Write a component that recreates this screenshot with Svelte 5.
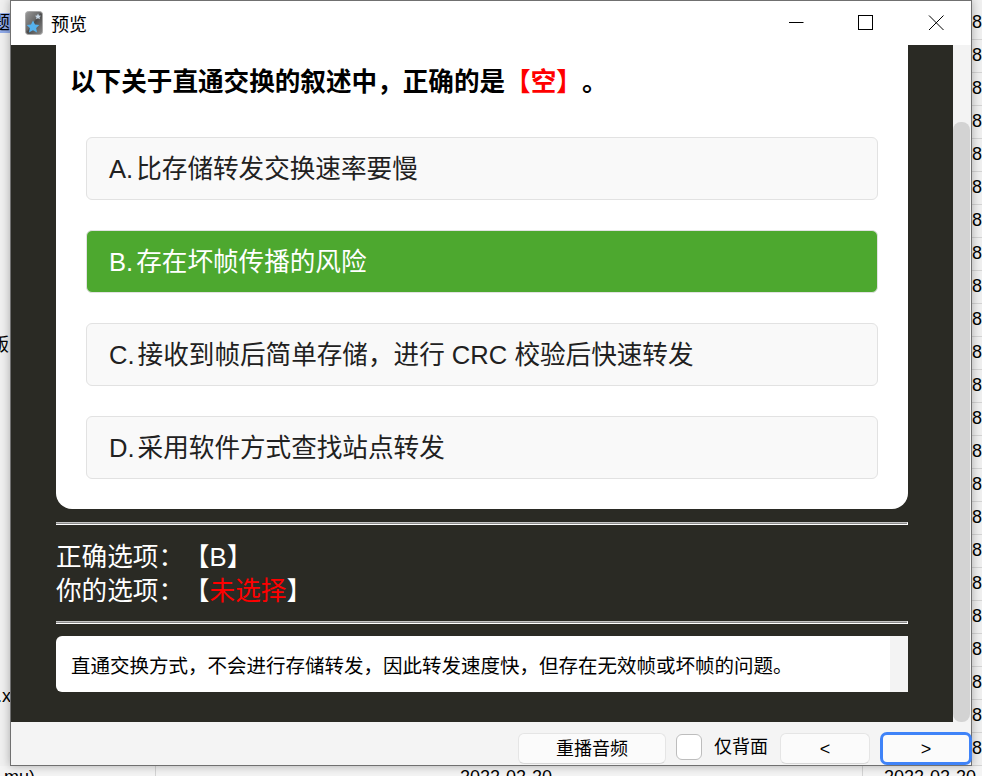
<script>
  const options = [
    { label: "A.", text: "比存储转发交换速率要慢", correct: false },
    { label: "B.", text: "存在坏帧传播的风险", correct: true },
    { label: "C.", text: "接收到帧后简单存储，进行 CRC 校验后快速转发", correct: false },
    { label: "D.", text: "采用软件方式查找站点转发", correct: false },
  ];
  const rightCells = Array(23).fill("8");
</script>

<div class="desktop">
  <div class="table-left">
    <span class="frag selected">题</span>
    <span class="frag ban">版</span>
    <span class="frag ext">.x</span>
  </div>
  <div class="table-right">
    {#each rightCells as c}
      <div class="cell">{c}</div>
    {/each}
  </div>
  <div class="table-bottom">
    <span class="c1">mu)</span>
    <span class="c2">2022-02-20</span>
    <span class="c3">2022-02-20</span>
    <i class="col d1"></i>
    <i class="col d2"></i>
  </div>

  <div class="window">
    <header class="titlebar">
      <svg class="app-icon" width="18" height="24" viewBox="0 0 18 24">
        <defs>
          <linearGradient id="g" x1="0" y1="0" x2="1" y2="1">
            <stop offset="0" stop-color="#9a9a9a" />
            <stop offset="0.45" stop-color="#6a6a6a" />
            <stop offset="0.5" stop-color="#4a4a4a" />
            <stop offset="1" stop-color="#8c8c8c" />
          </linearGradient>
        </defs>
        <rect x="0.5" y="0.5" width="17" height="23" rx="3" fill="url(#g)" stroke="#a8a8a8" />
        <path d="M8 9.500l2 4 4.300.6-3.100 3 .8 4.300L8 19.300l-4 2.100.8-4.300-3.100-3 4.300-.6z" fill="#55b2ee" />
        <path d="M13 2.500l.9 1.900 2.100.3-1.500 1.500.4 2.100-1.900-1-1.900 1 .4-2.100-1.500-1.500 2.100-.3z" fill="#c6d6e4" />
      </svg>
      <span class="title">预览</span>
      <div class="win-controls">
        <svg width="16" height="16" viewBox="0 0 16 16"><path d="M1 7.500H15.500" stroke="#000" fill="none" /></svg>
        <svg width="16" height="16" viewBox="0 0 16 16"><rect x="0.5" y="0.5" width="14" height="14" stroke="#000" fill="none" /></svg>
        <svg width="16" height="16" viewBox="0 0 16 16"><path d="M1 0.500L15.500 15M15.500 0.500L1 15" stroke="#000" fill="none" /></svg>
      </div>
    </header>

    <div class="body">
      <main class="panel">
        <section class="card">
          <h1 class="question">以下关于直通交换的叙述中，正确的是<span class="red">【空】</span>。</h1>
          <div class="options">
            {#each options as o}
              <div class="option" class:correct={o.correct}>
                <span class="opt-label">{o.label}</span>{o.text}
              </div>
            {/each}
          </div>
        </section>
        <hr />
        <div class="answers">
          <div>正确选项：【B】</div>
          <div>你的选项：【<span class="red">未选择</span>】</div>
        </div>
        <hr />
        <div class="explain">
          <div class="explain-text">直通交换方式，不会进行存储转发，因此转发速度快，但存在无效帧或坏帧的问题。</div>
          <div class="explain-track"></div>
        </div>
      </main>
      <div class="scroll-track"><div class="scroll-thumb"></div></div>
    </div>

    <footer class="footer">
      <button class="btn replay">重播音频</button>
      <span class="check"></span>
      <span class="check-label">仅背面</span>
      <button class="btn nav">&lt;</button>
      <button class="btn nav focus">&gt;</button>
    </footer>
  </div>
</div>

<style>
  :global(body) {
    margin: 0;
    overflow: hidden;
  }

  .desktop {
    position: relative;
    width: 982px;
    height: 776px;
    overflow: hidden;
    background: #f0f0f0;
    font-family: "Liberation Sans", "Noto Sans CJK SC", sans-serif;
    text-spacing-trim: space-all;
    color: #000;
  }

  .table-left {
    position: absolute;
    left: 0;
    top: 0;
    width: 10px;
    height: 766px;
    background: #f0f0f0;
    font-size: 18px;
    overflow: hidden;
  }

  .frag {
    position: absolute;
    white-space: nowrap;
  }

  .selected {
    left: -8px;
    top: 13px;
    width: 18px;
    height: 20px;
    line-height: 20px;
    background: #8fa9e8;
  }

  .ban {
    left: -9px;
    top: 333px;
    line-height: 24px;
  }

  .ext {
    left: -3px;
    top: 684px;
    line-height: 24px;
  }

  .table-right {
    position: absolute;
    left: 972px;
    top: 7px;
    width: 10px;
    display: flex;
    flex-direction: column;
    background: #f0f0f0;
  }

  .cell {
    height: 33px;
    box-sizing: border-box;
    line-height: 31px;
    font-size: 18px;
    border-bottom: 1px solid #d4d4d4;
  }

  .table-bottom {
    position: absolute;
    left: 0;
    top: 766px;
    width: 982px;
    height: 10px;
    background: #f4f4f4;
    font-size: 18px;
    line-height: 24px;
    overflow: hidden;
  }

  .table-bottom span {
    position: absolute;
    top: -1px;
  }

  .c1 { left: 4px; }
  .c2 { left: 460px; }
  .c3 { left: 884px; }

  .col {
    position: absolute;
    top: 0;
    width: 1px;
    height: 10px;
    background: #d4d4d4;
  }

  .d1 { left: 155px; }
  .d2 { left: 862px; }

  .window {
    position: absolute;
    left: 10px;
    top: 0;
    width: 960px;
    height: 764px;
    border: 1px solid #707070;
    display: flex;
    flex-direction: column;
    background: #f4f4f4;
    box-shadow: 0 0 9px rgba(0, 0, 0, 0.3);
  }

  .titlebar {
    height: 44px;
    flex: none;
    display: flex;
    align-items: center;
    background: #fff;
    padding-left: 14px;
  }

  .app-icon {
    flex: none;
  }

  .title {
    margin-left: 8px;
    font-size: 18px;
  }

  .win-controls {
    margin-left: auto;
    display: flex;
    gap: 54px;
    padding-right: 27px;
  }

  .body {
    flex: none;
    height: 677px;
    display: flex;
  }

  .panel {
    width: 852px;
    padding: 0 45px;
    background: #2a2a24;
    color: #fff;
  }

  .card {
    height: 464px;
    box-sizing: border-box;
    background: #fff;
    border-radius: 0 0 16px 16px;
    padding: 20px 15px 0 14px;
    color: #000;
  }

  .question {
    margin: 0;
    font-size: 25.6px;
    line-height: 34px;
    font-weight: 700;
  }

  .red {
    color: #f00;
  }

  .options {
    display: flex;
    flex-direction: column;
    gap: 30px;
    margin: 38px 15px 0 16px;
  }

  .option {
    height: 63px;
    box-sizing: border-box;
    border: 1px solid #e2e2e2;
    border-radius: 6px;
    background: #f9f9f9;
    padding-left: 22px;
    font-size: 25.6px;
    line-height: 63px;
    color: #212121;
  }

  .option.correct {
    background: #4da82f;
    color: #fff;
  }

  .opt-label {
    margin-right: 3px;
  }

  hr {
    height: 1px;
    margin: 13px 0 0;
    border: 0;
    border-top: 1px solid #c4c4c4;
    border-bottom: 1px solid #fff;
    border-right: 1px solid #fff;
    background: #8a8a8a;
  }

  .answers {
    margin-top: 15px;
    font-size: 25.6px;
    line-height: 34px;
    height: 68px;
  }

  .explain {
    margin-top: 12px;
    height: 56px;
    display: flex;
    background: #fff;
    border-radius: 6px 0 0 6px;
    color: #000;
  }

  .explain-text {
    flex: 1;
    padding-left: 15px;
    font-size: 19.5px;
    line-height: 60px;
  }

  .explain-track {
    width: 18px;
    background: #f3f3f3;
  }

  .scroll-track {
    width: 17px;
    padding-top: 77px;
    background: #f3f3f3;
  }

  .scroll-thumb {
    height: 600px;
    background: #d3d3d3;
    border-radius: 8px;
  }

  .footer {
    flex: 1;
    display: flex;
    align-items: flex-start;
    background: #f4f4f4;
    padding-left: 507px;
    padding-top: 11px;
  }

  .btn {
    height: 31px;
    box-sizing: border-box;
    border: 1px solid #e5e5e5;
    border-bottom-color: #d8d8d8;
    border-radius: 6px;
    background: #fbfbfb;
    font-family: inherit;
    font-size: 18px;
    color: #000;
    padding: 0;
    line-height: 1;
  }

  .replay {
    width: 148px;
  }

  .nav {
    width: 90px;
    margin-left: 11px;
  }

  .nav.focus {
    outline: 3px solid #3f83f8;
    outline-offset: -2px;
  }

  .check {
    width: 26px;
    height: 26px;
    box-sizing: border-box;
    margin-left: 10px;
    margin-top: 1px;
    border: 1px solid #bdbdbd;
    border-radius: 6px;
    background: #fff;
  }

  .check-label {
    margin-left: 12px;
    width: 55px;
    font-size: 18px;
    line-height: 28px;
  }
</style>
